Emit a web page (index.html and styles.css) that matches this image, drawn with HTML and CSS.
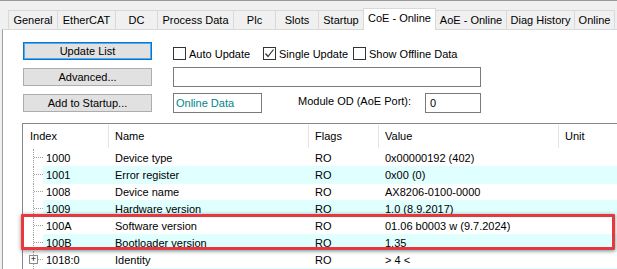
FILE: index.html
```html
<!DOCTYPE html>
<html lang="en">
<head>
  <meta charset="UTF-8" />
  <title>CoE - Online</title>
  <link rel="stylesheet" href="styles.css">
</head>

<body>
  <!-- Tab strip -->
  <div class="tabs">
    <div class="tab" style="width: 49px">General</div>
    <div class="tab" style="width: 58px">EtherCAT</div>
    <div class="tab" style="width: 42px">DC</div>
    <div class="tab" style="width: 76px">Process Data</div>
    <div class="tab" style="width: 42px">Plc</div>
    <div class="tab" style="width: 43px">Slots</div>
    <div class="tab" style="width: 45px">Startup</div>
    <div class="tab active" style="width: 73px">CoE - Online</div>
    <div class="tab" style="width: 70px">AoE - Online</div>
    <div class="tab" style="width: 68px">Diag History</div>
    <div class="tab last" style="width: 41px">Online</div>
  </div>

  <!-- Tab page -->
  <div class="panel">
    <div class="controls">
      <button class="btn default">Update List</button>
      <div class="checks">
        <label class="check"><span class="box"></span>Auto Update</label>
        <label class="check"><span class="box">
          <svg width="11" height="11" viewBox="0 0 11 11"><path d="M1.5 5.5 L4 8.5 L9.5 1.5" fill="none" stroke="#333" stroke-width="1.2"/></svg>
        </span>Single Update</label>
        <label class="check"><span class="box"></span>Show Offline Data</label>
      </div>

      <button class="btn">Advanced...</button>
      <div class="field wide"></div>

      <button class="btn">Add to Startup...</button>
      <div class="row-fields">
        <div class="field data">Online Data</div>
        <span class="port-label">Module OD (AoE Port):</span>
        <div class="field port">0</div>
      </div>
    </div>

    <!-- Object list -->
    <div class="list">
      <div class="list-head">
        <div class="hcell">Index</div>
        <div class="hcell sep">Name</div>
        <div class="hcell sep">Flags</div>
        <div class="hcell sep">Value</div>
        <div class="hcell sep">Unit</div>
      </div>

      <div class="list-row">
        <div class="tree"></div><div class="cell idx">1000</div><div class="cell">Device type</div><div class="cell">RO</div><div class="cell">0x00000192 (402)</div><div class="cell"></div>
      </div>
      <div class="list-row alt">
        <div class="tree"></div><div class="cell idx">1001</div><div class="cell">Error register</div><div class="cell">RO</div><div class="cell">0x00 (0)</div><div class="cell"></div>
      </div>
      <div class="list-row">
        <div class="tree"></div><div class="cell idx">1008</div><div class="cell">Device name</div><div class="cell">RO</div><div class="cell">AX8206-0100-0000</div><div class="cell"></div>
      </div>
      <div class="list-row alt">
        <div class="tree"></div><div class="cell idx">1009</div><div class="cell">Hardware version</div><div class="cell">RO</div><div class="cell">1.0 (8.9.2017)</div><div class="cell"></div>
      </div>
      <div class="list-row">
        <div class="tree"></div><div class="cell idx">100A</div><div class="cell">Software version</div><div class="cell">RO</div><div class="cell">01.06 b0003 w (9.7.2024)</div><div class="cell"></div>
      </div>
      <div class="list-row alt">
        <div class="tree"></div><div class="cell idx">100B</div><div class="cell">Bootloader version</div><div class="cell">RO</div><div class="cell">1.35</div><div class="cell"></div>
      </div>
      <div class="list-row">
        <div class="tree"><span class="expander">+</span></div><div class="cell idx">1018:0</div><div class="cell">Identity</div><div class="cell">RO</div><div class="cell">&gt; 4 &lt;</div><div class="cell"></div>
      </div>
      <div class="list-row alt">
        <div class="tree"></div><div class="cell idx"></div><div class="cell"></div><div class="cell"></div><div class="cell"></div><div class="cell"></div>
      </div>

      <!-- highlight marker -->
      <div class="marker"></div>
    </div>
  </div>
</body>
</html>
```

FILE: styles.css
```css
html {
  overflow: hidden;
}

body {
  margin: 0;
  height: 269px;
  box-sizing: border-box;
  overflow: hidden;
  background-color: #f0f0f0;
  border-top: 1px solid #9a9a9a;
  font-family: 'Liberation Sans', Arial, sans-serif;
  font-size: 11px;
  color: #000;
}

/* Tabs */
.tabs {
  display: flex;
  align-items: flex-end;
  height: 21px;
  padding-left: 8px;
  margin-top: 7px;
  position: relative;
  z-index: 2;
}

.tab {
  box-sizing: border-box;
  height: 19px;
  line-height: 18px;
  text-align: center;
  white-space: nowrap;
  border: 1px solid #d9d9d9;
  border-right: none;
  border-bottom: none;
  background: #f0f0f0;
}

.tab.last {
  border-right: 1px solid #d9d9d9;
}

.tab.active {
  height: 22px;
  line-height: 18px;
  margin-bottom: -1px;
  background: #fff;
  border-right: 1px solid #d9d9d9;
}

.tab.active + .tab {
  border-left: none;
}

/* Tab page */
.panel {
  margin-left: 2px;
  height: 240px;
  overflow: hidden;
  background: #fff;
  border-top: 1px solid #d9d9d9;
  border-left: 1px solid #a0a0a0;
  padding: 12px 0 0 20px;
}

.controls {
  display: grid;
  grid-template-columns: 129px 1fr;
  grid-auto-rows: 26px;
  column-gap: 21px;
  align-items: start;
}

.btn {
  box-sizing: border-box;
  height: 18px;
  padding: 0;
  font: inherit;
  color: #000;
  background: #e1e1e1;
  border: 1px solid #adadad;
}

.btn.default {
  border-color: #0078d7;
  box-shadow: inset 0 0 0 1px #5ea6e3;
}

.checks {
  display: flex;
  margin-top: 5px;
}

.check {
  display: flex;
  align-items: center;
  gap: 3px;
  width: 90px;
  flex-shrink: 0;
  height: 13px;
  white-space: nowrap;
}

.check:last-child {
  width: auto;
}

.box {
  box-sizing: border-box;
  flex-shrink: 0;
  width: 13px;
  height: 13px;
  border: 1px solid #333;
  background: #fff;
  display: flex;
  align-items: center;
  justify-content: center;
}

.field {
  box-sizing: border-box;
  height: 20px;
  line-height: 18px;
  padding-left: 2px;
  border: 1px solid #7a7a7a;
  background: #fff;
  margin-top: -1px;
}

.field.wide {
  width: 308px;
}

.row-fields {
  display: flex;
  align-items: flex-start;
}

.field.data {
  width: 89px;
  color: #00868b;
}

.port-label {
  margin-left: 36px;
  width: 127px;
  margin-top: 1px;
}

.field.port {
  width: 56px;
  padding-left: 4px;
}

/* Object list */
.list {
  position: relative;
  width: 620px;
  margin: 3px 0 0 -1px;
  border: 1px solid #828790;
  border-right: none;
  border-bottom: none;
  background: #fff;
}

.list-head,
.list-row {
  display: grid;
  grid-template-columns: 20px 65px 200px 70px 180px 1fr;
}

.list-head {
  grid-template-columns: 85px 200px 70px 180px 1fr;
  height: 25px;
}

.hcell {
  position: relative;
  padding-left: 7px;
  line-height: 25px;
}

.hcell.sep::before {
  content: "";
  position: absolute;
  left: 0;
  top: 1px;
  bottom: 1px;
  width: 1px;
  background: #e5e5e5;
}

.list-row {
  height: 17px;
  line-height: 18px;
}

.cell {
  padding-left: 7px;
  white-space: nowrap;
}

.cell.idx {
  padding-left: 3px;
}

.list-row.alt .cell {
  background: #e0ffff;
}

.tree {
  position: relative;
}

.tree::before {
  content: "";
  position: absolute;
  left: 10px;
  top: 0;
  bottom: 0;
  border-left: 1px dotted #a0a0a0;
}

.tree::after {
  content: "";
  position: absolute;
  left: 11px;
  top: 8px;
  width: 9px;
  border-top: 1px dotted #a0a0a0;
}

.expander {
  position: absolute;
  z-index: 1;
  left: 6px;
  top: 4px;
  box-sizing: border-box;
  width: 9px;
  height: 9px;
  border: 1px solid #8c8c8c;
  background: #fff;
  font-size: 9px;
  line-height: 6px;
  text-align: center;
}

.marker {
  position: absolute;
  left: -2px;
  top: 90px;
  width: 594px;
  height: 36px;
  box-sizing: border-box;
  border: 3px solid #e8383d;
  border-radius: 1px;
  box-shadow: 0 1px 4px rgba(0, 0, 0, 0.45);
}
```
